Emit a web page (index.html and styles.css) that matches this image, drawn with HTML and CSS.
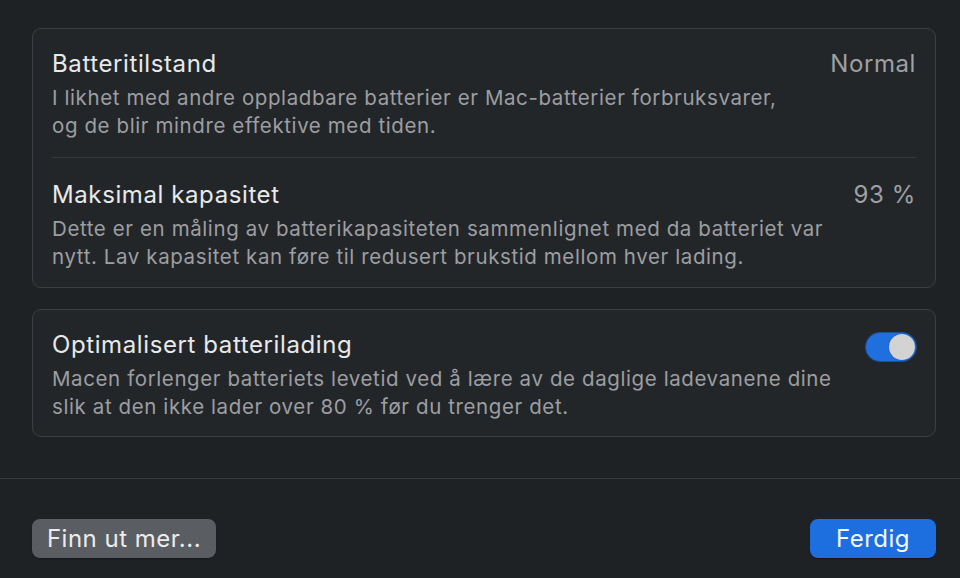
FILE: index.html
```html
<!DOCTYPE html>
<html lang="nb">
<head>
<meta charset="utf-8">
<title>Batteri</title>
<link rel="stylesheet" href="styles.css">
</head>
<body>
<div class="sheet">
  <main class="content">
    <section class="card">
      <div class="row">
        <div class="row-text">
          <div class="title">Batteritilstand</div>
          <div class="desc">I likhet med andre oppladbare batterier er Mac-batterier forbruksvarer,<br>og de blir mindre effektive med tiden.</div>
        </div>
        <div class="value">Normal</div>
      </div>
      <div class="sep"></div>
      <div class="row">
        <div class="row-text">
          <div class="title">Maksimal kapasitet</div>
          <div class="desc">Dette er en måling av batterikapasiteten sammenlignet med da batteriet var<br>nytt. Lav kapasitet kan føre til redusert brukstid mellom hver lading.</div>
        </div>
        <div class="value">93 %</div>
      </div>
    </section>
    <section class="card">
      <div class="row">
        <div class="row-text">
          <div class="title">Optimalisert batterilading</div>
          <div class="desc">Macen forlenger batteriets levetid ved å lære av de daglige ladevanene dine<br>slik at den ikke lader over 80 % før du trenger det.</div>
        </div>
        <div class="toggle on"><span class="knob"></span></div>
      </div>
    </section>
  </main>
  <footer class="footer">
    <button class="btn btn-secondary">Finn ut mer...</button>
    <button class="btn btn-primary">Ferdig</button>
  </footer>
</div>
</body>
</html>
```

FILE: styles.css
```css
* { box-sizing: border-box; }
html, body { margin: 0; padding: 0; }
body {
  background: #1f2225;
  font-family: Inter, "Noto Sans", "Liberation Sans", sans-serif;
  color: #e4e5e6;
  width: 960px;
  height: 578px;
  overflow: hidden;
}
.sheet { display: flex; flex-direction: column; height: 578px; }
.content {
  padding: 28px 24px 0 32px;
  display: flex;
  flex-direction: column;
  gap: 21px;
}
.card {
  background: #232629;
  border: 1px solid #3b3e42;
  border-radius: 9px;
  padding: 0 19px 0 19px;
}
.row {
  display: flex;
  justify-content: space-between;
  align-items: flex-start;
  padding: 18px 0 17px;
}
.sep + .row { padding: 20px 0 16px; }
.card:last-child .row { padding-bottom: 15px; }
.title {
  font-size: 24px;
  line-height: 34px;
  color: #e8e9ea;
  letter-spacing: 0.6px;
}
.desc {
  margin-top: 3px;
  font-size: 20.5px;
  line-height: 28px;
  color: #9c9ea1;
  letter-spacing: 0.6px;
}
.value {
  font-size: 24px;
  line-height: 34px;
  color: #9ea0a3;
  letter-spacing: 0.6px;
}
.sep {
  height: 1px;
  background: #35383b;
}
.toggle {
  width: 52px;
  height: 30px;
  border-radius: 15px;
  background: #1f6fde;
  border: 1px solid #1a4f9a;
  margin-top: 4px;
  margin-right: -1px;
  display: flex;
  align-items: center;
  justify-content: flex-end;
  padding: 1px;
}
.knob {
  width: 26px;
  height: 26px;
  border-radius: 50%;
  background: #d3d3d3;
  box-shadow: 0 0 1px rgba(0,0,0,0.4);
}
.footer {
  margin-top: 41px;
  border-top: 1px solid #3a3d40;
  padding: 40px 24px 0 32px;
  display: flex;
  justify-content: space-between;
}
.btn {
  font-family: inherit;
  font-size: 24px;
  letter-spacing: 0.5px;
  height: 39px;
  border: none;
  border-radius: 8px;
  padding: 0;
  color: #ececec;
  line-height: 39px;
  text-align: center;
}
.btn-secondary {
  width: 184px;
  background: #5a5d61;
  box-shadow: 0 1px 1px rgba(0,0,0,0.35);
}
.btn-primary {
  width: 126px;
  background: #1d6fdf;
  color: #f4f7fb;
  box-shadow: 0 1px 1px rgba(0,0,0,0.35);
}
```
